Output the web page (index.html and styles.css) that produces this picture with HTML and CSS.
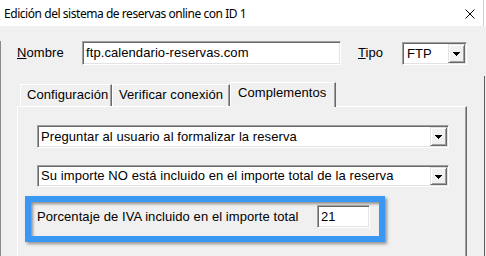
FILE: index.html
```html
<!DOCTYPE html>
<html lang="es">
<head>
<meta charset="utf-8">
<title>Edición del sistema de reservas online con ID 1</title>
<link rel="stylesheet" href="styles.css">
</head>
<body>
<div class="window">
  <div class="titlebar">
    <span class="title">Edición del sistema de reservas online con ID 1</span>
    <svg class="close" width="10" height="10" viewBox="0 0 10 10"><path d="M0.5 0.5 L9.5 9.5 M9.5 0.5 L0.5 9.5" stroke="#000" stroke-width="1" fill="none"/></svg>
  </div>
  <div class="client">
    <div class="row-top">
      <span class="lbl lbl-nombre"><u>N</u>ombre</span>
      <div class="field f-nombre">ftp.calendario-reservas.com</div>
      <span class="lbl lbl-tipo"><u>T</u>ipo</span>
      <div class="field combo f-tipo">
        <span class="val">FTP</span>
        <span class="dd"><svg width="7" height="4" viewBox="0 0 7 4"><path d="M0 0H7V1H6V2H5V3H4V4H3V3H2V2H1V1H0Z" fill="#000"/></svg></span>
      </div>
    </div>
    <div class="tabs">
      <div class="tab t1">Configuración</div>
      <div class="tab t2">Verificar conexión</div>
      <div class="tab t3 active">Complementos</div>
    </div>
    <div class="panel">
      <div class="field combo wide">
        <span class="val">Preguntar al usuario al formalizar la reserva</span>
        <span class="dd"><svg width="7" height="4" viewBox="0 0 7 4"><path d="M0 0H7V1H6V2H5V3H4V4H3V3H2V2H1V1H0Z" fill="#000"/></svg></span>
      </div>
      <div class="field combo wide second">
        <span class="val">Su importe NO está incluido en el importe total de la reserva</span>
        <span class="dd"><svg width="7" height="4" viewBox="0 0 7 4"><path d="M0 0H7V1H6V2H5V3H4V4H3V3H2V2H1V1H0Z" fill="#000"/></svg></span>
      </div>
      <div class="highlight">
        <span class="lbl lbl-iva">Porcentaje de IVA incluido en el importe total</span>
        <div class="field f-iva">21</div>
      </div>
    </div>
  </div>
</div>
</body>
</html>
```

FILE: styles.css
```css
* { box-sizing: border-box; }

html, body {
  margin: 0;
  padding: 0;
  background: #f0f0f0;
}

.window {
  width: 486px;
  height: 256px;
  overflow: hidden;
  background: #f0f0f0;
  font-family: "Liberation Sans", Arial, sans-serif;
  font-size: 13px;
  letter-spacing: 0.08px;
  color: #000;
}

.titlebar {
  height: 26px;
  background: #fff;
  display: flex;
  align-items: center;
  justify-content: space-between;
  padding: 0 11px 0 4px;
  box-shadow: inset -2px 0 0 #fff, inset -3px 0 0 #d0d0d0;
}

.title {
  font-family: "Noto Sans", "DejaVu Sans", sans-serif;
  font-size: 12px;
  letter-spacing: -0.45px;
  color: #000;
  white-space: nowrap;
}

.close {
  display: block;
  margin-top: 1px;
}

.client {
  height: 230px;
  border-left: 1px solid #8a8a8a;
  padding-left: 16px;
  background: linear-gradient(#5f5f5f, #5f5f5f) no-repeat right 1px top 35px / 1px 100%, #f0f0f0;
}

.row-top {
  display: flex;
  align-items: flex-start;
  height: 24px;
  margin-top: 15px;
}

.lbl {
  white-space: nowrap;
}

.lbl-nombre {
  width: 65px;
  line-height: 24px;
}

.lbl-tipo {
  width: 44px;
  margin-left: 17px;
  line-height: 24px;
}

.field {
  background: #fff;
  border: 1px solid;
  border-color: #a0a0a0 #fff #fff #a0a0a0;
  box-shadow: inset 1px 1px 0 #696969, inset -1px -1px 0 #e3e3e3;
  white-space: nowrap;
  overflow: hidden;
}

.f-nombre {
  width: 259px;
  height: 24px;
  line-height: 20px;
  padding: 1px 0 0 3px;
}

.combo {
  display: flex;
  align-items: stretch;
  padding: 1px 1px 1px 1px;
}

.combo .val {
  flex: 1;
  line-height: 19px;
  padding-left: 2px;
  overflow: hidden;
}

.combo .dd {
  width: 17px;
  flex: none;
  display: flex;
  align-items: center;
  justify-content: center;
  background: #f0f0f0;
  border: 1px solid;
  border-color: #e3e3e3 #696969 #696969 #e3e3e3;
  box-shadow: inset 1px 1px 0 #fff, inset -1px -1px 0 #a0a0a0;
}

.combo .dd svg {
  display: block;
  margin-top: 1px;
}

.f-tipo {
  width: 65px;
  height: 23px;
  margin-top: 1px;
}

.f-tipo .val {
  padding-left: 3px;
}

.tabs {
  display: flex;
  align-items: flex-end;
  margin-top: 17px;
  margin-left: 3px;
  height: 24px;
}

.tab {
  height: 22px;
  padding: 0 0 0 6px;
  line-height: 19px;
  white-space: nowrap;
  border-top: 1px solid #fff;
  border-left: 1px solid #fff;
  border-right: 1px solid #696969;
  box-shadow: inset -1px 0 0 #a0a0a0;
  background: #f0f0f0;
}

.t1 { width: 92px; }
.t2 { width: 118px; }
.t3 { width: 106px; }

.tab.active {
  height: 25px;
  margin-bottom: -1px;
  padding-left: 7px;
  position: relative;
  z-index: 1;
}

.panel {
  width: 450px;
  height: 200px;
  border-top: 1px solid #fff;
  border-left: 1px solid #fff;
  border-right: 1px solid #696969;
  box-shadow: inset -1px 0 0 #a0a0a0;
  padding: 18px 0 0 19px;
}

.wide {
  width: 412px;
  height: 23px;
}

.wide .val {
  padding-left: 2px;
}

.second {
  margin-top: 17px;
  height: 22px;
}

.second .val {
  line-height: 18px;
}

.highlight {
  margin-top: 9px;
  margin-left: -12px;
  width: 360px;
  height: 46px;
  border: 6px solid #3a97f4;
  box-shadow: 2px 2px 3px rgba(0, 0, 0, 0.4), inset 2px 2px 3px rgba(0, 0, 0, 0.4);
  display: flex;
  align-items: flex-start;
  padding: 3px 9px 0 6px;
}

.lbl-iva {
  width: 280px;
  line-height: 23px;
}

.f-iva {
  width: 53px;
  height: 23px;
  line-height: 19px;
  padding: 1px 0 0 3px;
}
```
